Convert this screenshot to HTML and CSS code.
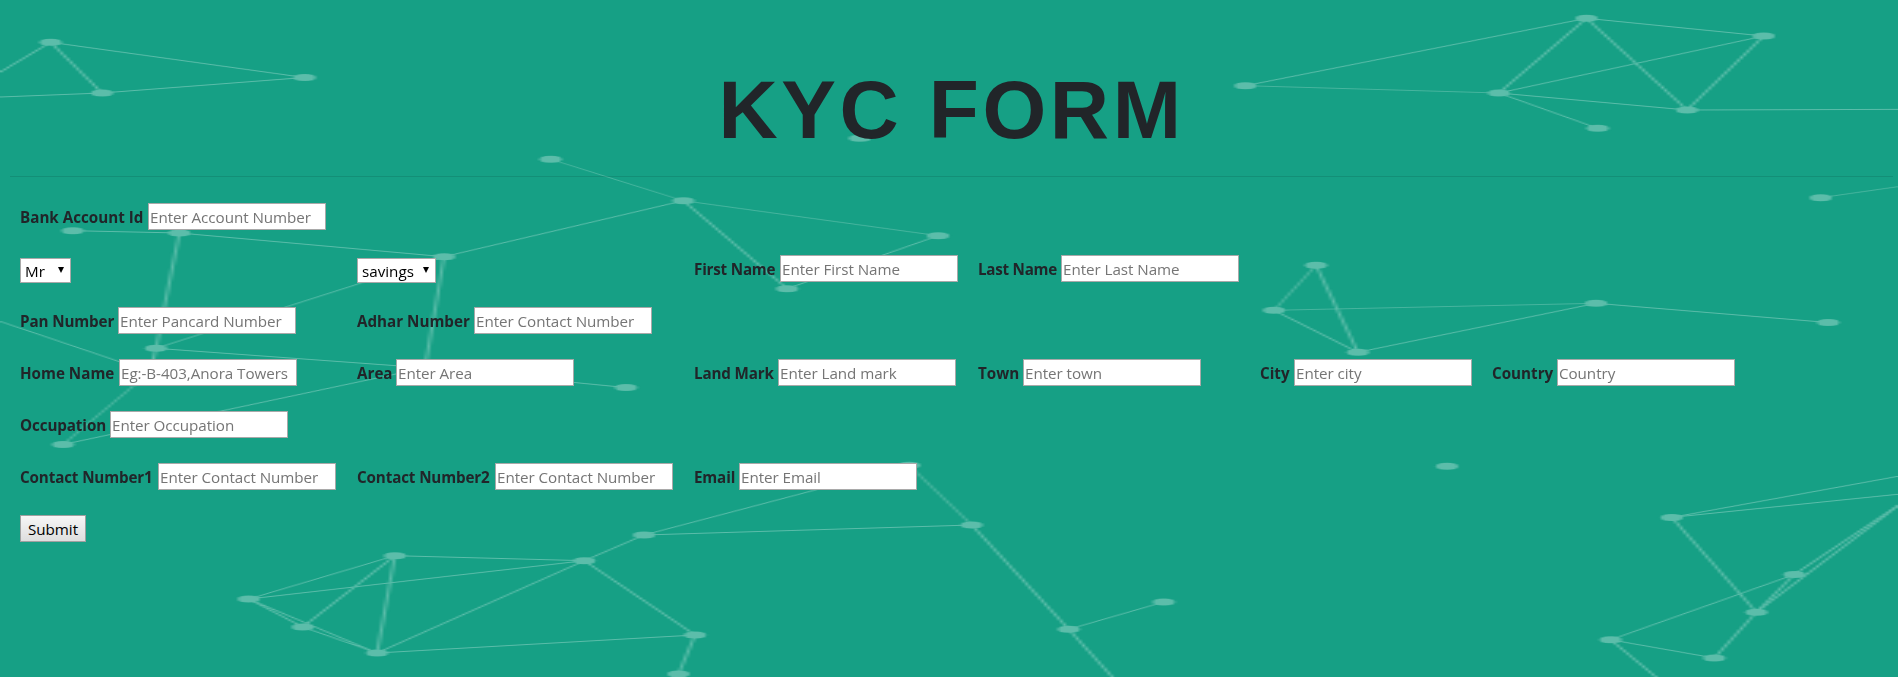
FILE: index.html
```html
<!DOCTYPE html>
<html lang="en">
<head>
<meta charset="utf-8">
<title>KYC Form</title>
<link rel="stylesheet" href="styles.css">
</head>
<body>
<canvas class="particles" id="particles" width="600" height="677"></canvas>
<main class="page">
  <h1 class="title">KYC FORM</h1>
  <hr class="rule">
  <form class="form">
    <div class="row">
      <div class="field"><label class="l-account">Bank Account Id</label><input type="text" placeholder="Enter Account Number"></div>
    </div>
    <div class="row">
      <div class="field"><span class="select s-title"><select><option>Mr</option></select></span></div>
      <div class="field"><span class="select s-account"><select><option>savings</option></select></span></div>
      <div class="field"><label class="l-first">First Name</label><input type="text" placeholder="Enter First Name"></div>
      <div class="field"><label class="l-last">Last Name</label><input type="text" placeholder="Enter Last Name"></div>
    </div>
    <div class="row">
      <div class="field"><label class="l-pan">Pan Number</label><input type="text" placeholder="Enter Pancard Number"></div>
      <div class="field"><label class="l-adhar">Adhar Number</label><input type="text" placeholder="Enter Contact Number"></div>
    </div>
    <div class="row">
      <div class="field"><label class="l-home">Home Name</label><input type="text" placeholder="Eg:-B-403,Anora Towers"></div>
      <div class="field"><label class="l-area">Area</label><input type="text" placeholder="Enter Area"></div>
      <div class="field"><label class="l-land">Land Mark</label><input type="text" placeholder="Enter Land mark"></div>
      <div class="field"><label class="l-town">Town</label><input type="text" placeholder="Enter town"></div>
      <div class="field"><label class="l-city">City</label><input type="text" placeholder="Enter city"></div>
      <div class="field"><label class="l-country">Country</label><input type="text" placeholder="Country"></div>
    </div>
    <div class="row">
      <div class="field"><label class="l-occupation">Occupation</label><input type="text" placeholder="Enter Occupation"></div>
    </div>
    <div class="row">
      <div class="field"><label class="l-contact">Contact Number1</label><input type="text" placeholder="Enter Contact Number"></div>
      <div class="field"><label class="l-contact">Contact Number2</label><input type="text" placeholder="Enter Contact Number"></div>
      <div class="field"><label class="l-email">Email</label><input type="text" placeholder="Enter Email"></div>
    </div>
    <div class="row">
      <div class="field"><button class="submit" type="button">Submit</button></div>
    </div>
  </form>
</main>
<script src="main.js"></script>
</body>
</html>
```

FILE: styles.css
```css
* { box-sizing: border-box; }

html, body {
  margin: 0;
  height: 677px;
  overflow: hidden;
}

body {
  background: #16a085;
  color: #212529;
  font-family: "Open Sans", "Noto Sans", sans-serif;
  font-size: 15.2px;
  line-height: 24px;
}

/* particle network behind the form */
.particles {
  position: absolute;
  top: 0;
  left: 0;
  width: 100%;
  height: 677px;
}

.page {
  position: relative;
  padding: 60px 5px 0 10px;
}

.title {
  margin: 0;
  height: 116px;
  text-align: center;
  font: 700 82px/100px "Liberation Sans", Arial, sans-serif;
  letter-spacing: 3.6px;
}

.rule {
  margin: 0;
  border: 0;
  border-top: 1px solid rgba(0, 0, 0, 0.1);
}

.form { padding: 14px 0 0 10px; }

.row {
  display: grid;
  grid-template-columns: 337px 337px 284px 282px 232px auto;
  height: 52px;
  padding-top: 12px;
  align-items: start;
}

.field {
  display: flex;
  align-items: center;
  height: 27px;
}

label { font-weight: 700; white-space: nowrap; padding-top: 1px; }

.l-account { width: 128px; }
.l-contact { width: 138px; letter-spacing: -0.13px; }
.l-pan { width: 98px; letter-spacing: -0.12px; }
.l-adhar { width: 117px; }
.l-home { width: 99px; }
.l-occupation { width: 90px; letter-spacing: -0.1px; }
.l-area { width: 39px; }
.l-first { width: 86px; letter-spacing: -0.2px; }
.l-last { width: 83px; letter-spacing: -0.25px; }
.l-land { width: 84px; letter-spacing: -0.15px; }
.l-town { width: 45px; }
.l-city { width: 34px; }
.l-country { width: 65px; }
.l-email { width: 45px; letter-spacing: -0.15px; }

input, select, .submit {
  font: inherit;
  margin: 0;
  border: 1px solid #a9a9a9;
  border-radius: 0;
}

input {
  width: 178px;
  height: 27px;
  padding: 2px 1px 1px;
  background: #fff;
  letter-spacing: -0.05px;
}

input::placeholder { color: #757575; opacity: 1; }

.select {
  position: relative;
  display: block;
  height: 25px;
  margin-top: 4px;
}

.select::after {
  content: "";
  position: absolute;
  top: 9px;
  right: 7px;
  width: 6px;
  height: 6px;
  background: #000;
  clip-path: polygon(0 0, 100% 0, 50% 100%);
}

.s-title { width: 51px; }
.s-account { width: 79px; }

select {
  appearance: none;
  display: block;
  width: 100%;
  height: 25px;
  padding: 1px 0 0 4px;
  line-height: 20px;
  background: #fff;
  color: #000;
}

.submit {
  width: 66px;
  height: 27px;
  padding: 1px 0 0;
  border-color: #a0a0a0;
  background: linear-gradient(#f6f6f6, #dedede);
  color: #000;
  line-height: 22px;
}
```

FILE: main.js
```js
const canvas = document.getElementById('particles');
const ctx = canvas.getContext('2d');
const stretch = 1898 / canvas.width;

const nodes = {
  a: [50.6, 42.3], b: [102, 93], c: [304.5, 77.5],
  d: [550.6, 159.3], e: [683.3, 200.7], f: [938, 235.7], g: [787, 288.7], h: [444, 256.7],
  i: [72.7, 230.7], j: [179.3, 233], k: [156, 348.3], l: [150, 372], m: [63, 444.5],
  n: [425, 367.8], o: [626, 387.6], p: [859.8, 138.3],
  q: [909, 465.3], r: [971.7, 525], s: [1068.7, 629.3], t: [1163.7, 602],
  u: [248.7, 599], v: [302.7, 627], w: [377, 653], x: [394.9, 555.7],
  y: [584.3, 560.7], z: [644, 535], A: [695, 635], B: [678.5, 674],
  C: [1245.4, 85.7], D: [1586.5, 18.3], E: [1763.7, 36], F: [1498.8, 93],
  G: [1687, 110], H: [1597.6, 128.3], I: [1820.7, 197.7],
  J: [1316, 265.3], K: [1273.9, 310.3], L: [1357.8, 352.3], M: [1596, 303.3], N: [1828.2, 322.5],
  O: [1446.9, 466.2], P: [1671.7, 517.4], Q: [1794.3, 574.5], R: [1756.3, 612.2],
  S: [1610.7, 639.8], T: [1714.3, 658]
};

const links = ('ab ac bc de ef eg fg eh hj hk hn ij jk kl lm kn mn no ' +
  'qz qr rz rs st zy yx yu yw yA xu xv xw uv uw vw wA AB ' +
  'CD CF DE DF DG EF EG FG FH JK JL KL KM LM MN PR QR QS ST RT').split(' ');

// links that run past the edges of the window
const open = [
  ['a', -20, 84], ['b', -20, 97.8], ['l', -20, 314.6], ['G', 1920, 109.3], ['I', 1920, 183.5],
  ['P', 1920, 472.3], ['P', 1920, 492], ['Q', 1920, 490.6], ['R', 1920, 489.3],
  ['S', 1673, 691], ['s', 1125, 691]
];

const faint = ['de', 'ef', 'qr', 'CF', 'JK', 'KM', 'lm'];

function line(x1, y1, x2, y2, alpha) {
  ctx.globalAlpha = alpha;
  ctx.beginPath();
  ctx.moveTo(x1 / stretch, y1);
  ctx.lineTo(x2 / stretch, y2);
  ctx.stroke();
}

ctx.fillStyle = '#5cbdaa';
ctx.strokeStyle = '#5cbdaa';
ctx.lineWidth = 1;
for (const l of links) line(...nodes[l[0]], ...nodes[l[1]], faint.includes(l) ? 0.7 : 1);
for (const [n, x, y] of open) line(...nodes[n], x, y, n === 'I' ? 0.7 : 1);
ctx.globalAlpha = 1;
for (const [x, y] of Object.values(nodes)) {
  ctx.beginPath();
  ctx.arc(x / stretch, y, 3.5, 0, Math.PI * 2);
  ctx.fill();
}
```
